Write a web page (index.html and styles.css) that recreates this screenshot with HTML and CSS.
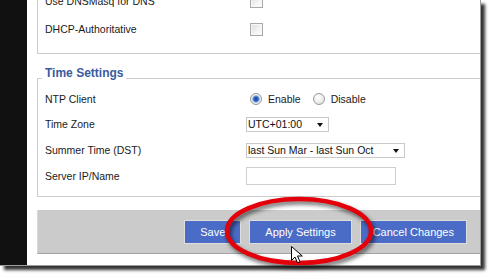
FILE: index.html
```html
<!DOCTYPE html>
<html lang="en">

<head>
    <meta charset="UTF-8">
    <title>Basic Setup - Time Settings</title>
    <link rel="stylesheet" href="styles.css">
</head>

<body>
    <div class="frame">
        <div class="strip"></div>
        <div class="main">
            <fieldset class="group group-top">
                <div class="rows">
                    <label class="lbl">Use DNSMasq for DNS</label>
                    <div class="ctl"><input type="checkbox" class="check"></div>
                    <label class="lbl">DHCP-Authoritative</label>
                    <div class="ctl"><input type="checkbox" class="check"></div>
                </div>
            </fieldset>
            <fieldset class="group group-time">
                <legend>Time Settings</legend>
                <div class="rows">
                    <label class="lbl">NTP Client</label>
                    <div class="ctl">
                        <label class="opt"><input type="radio" name="ntp" class="radio" checked>Enable</label>
                        <label class="opt"><input type="radio" name="ntp" class="radio">Disable</label>
                    </div>
                    <label class="lbl">Time Zone</label>
                    <div class="ctl">
                        <span class="pick"><select class="sel sel-zone">
                            <option>UTC+01:00</option>
                        </select></span>
                    </div>
                    <label class="lbl">Summer Time (DST)</label>
                    <div class="ctl">
                        <span class="pick"><select class="sel sel-dst">
                            <option>last Sun Mar - last Sun Oct</option>
                        </select></span>
                    </div>
                    <label class="lbl">Server IP/Name</label>
                    <div class="ctl"><input type="text" class="field"></div>
                </div>
            </fieldset>
            <div class="actions">
                <button class="btn">Save</button>
                <button class="btn">Apply Settings</button>
                <button class="btn btn-cancel">Cancel Changes</button>
            </div>
        </div>
        <!-- red marker round the apply button -->
        <svg class="ring" width="170" height="85" viewBox="0 0 170 85">
            <ellipse cx="84" cy="41" rx="72" ry="32" fill="none" stroke="#e3000b" stroke-width="4.5"/>
        </svg>
        <svg class="cursor" width="14" height="20" viewBox="0 0 14 20">
            <path d="M1.5 1.5 L1.5 15.5 L5 12 L7.5 17.8 L10 16.8 L7.5 11 L12.3 11 Z" fill="#fff" stroke="#000" stroke-width="1" stroke-linejoin="round"/>
        </svg>
    </div>
</body>

</html>
```

FILE: styles.css
```css
* {
    margin: 0;
    padding: 0;
    box-sizing: border-box;
}

html,
body {
    width: 100%;
    height: 100%;
    background: #fff;
    overflow: hidden;
}

body {
    font-family: "Liberation Sans", Arial, sans-serif;
    font-size: 10.5px;
    color: #1a1a1a;
}

.frame {
    position: relative;
    display: flex;
    width: 481px;
    height: 266px;
    border-right: 1px solid #9c9c9c;
    border-bottom: 1px solid #9c9c9c;
    box-shadow: 4px 4px 3px rgba(0, 0, 0, 0.8);
    background: #fff;
}

.strip {
    width: 27px;
    background: #111;
}

.main {
    flex: 1;
    padding-left: 10px;
    overflow: hidden;
}

.group {
    border: 1px solid #cdcdcd;
    margin-right: -20px;
    min-inline-size: 0;
}

.group-top {
    border-top: none;
    margin-top: -8px;
    padding: 0 0 15px 7px;
}

.group-top .rows {
    row-gap: 10px;
}

.group-time {
    margin-top: 12px;
    padding: 0 0 11px 7px;
}

.group-time .rows {
    grid-template-rows: 17px 18px 18px 18px;
    row-gap: 8px;
}

legend {
    font-size: 12px;
    font-weight: bold;
    line-height: 14px;
    color: #3a5ba0;
    padding: 0 3px 10px;
    margin-left: -3px;
}

.rows {
    display: grid;
    grid-template-columns: 201px auto;
    grid-auto-rows: 18px;
    align-items: center;
}

.lbl {
    white-space: nowrap;
}

.ctl {
    display: flex;
    align-items: center;
}

.check {
    appearance: none;
    width: 13px;
    height: 13px;
    margin-left: 4px;
    border: 1px solid #a9a9a9;
    background: linear-gradient(135deg, #dcdcdc 0%, #f4f4f4 60%, #fff 100%);
    box-shadow: inset 0 0 0 1px #f7f7f7;
}

.opt {
    display: flex;
    align-items: center;
    margin-right: 12px;
}

.radio {
    appearance: none;
    width: 12px;
    height: 12px;
    margin: 0 6px 0 4px;
    border: 1px solid #9a9a9a;
    border-radius: 50%;
    background: radial-gradient(circle at 40% 35%, #fff 0, #e6e6e6 70%, #d0d0d0 100%);
}

.radio:checked {
    background: radial-gradient(circle at center, #1f4ea6 0, #2f62be 2.2px, #9dbbe6 3.4px, #f2f2f2 4.4px, #dcdcdc 100%);
}

.opt + .opt .radio {
    margin-left: 0;
}

.pick {
    position: relative;
    display: inline-block;
}

.pick::after {
    content: "";
    position: absolute;
    top: 6px;
    right: 6px;
    border-left: 3.5px solid transparent;
    border-right: 3.5px solid transparent;
    border-top: 4px solid #111;
    pointer-events: none;
}

.sel {
    appearance: none;
    display: block;
    height: 15px;
    padding: 0 16px 0 1px;
    border: 1px solid #c9c9c9;
    border-radius: 0;
    background: #fff;
    font-family: inherit;
    font-size: 10.5px;
    line-height: 13px;
    color: #111;
}

.sel-zone {
    width: 83px;
}

.sel-dst {
    width: 159px;
}

.field {
    width: 150px;
    height: 18px;
    border: 1px solid #cfcfcf;
    background: #fff;
}

.actions {
    display: flex;
    justify-content: flex-end;
    align-items: center;
    gap: 8px;
    height: 44px;
    margin-top: 13px;
    padding-right: 13px;
    background: #cbcbcb;
    border-left: 1px solid #d8d8d8;
    border-bottom: 1px solid #a3a3a3;
}

.btn {
    height: 24px;
    padding: 0 15px;
    border: 1px solid #dedede;
    background: #4a6cc6;
    color: #fff;
    font-family: "Liberation Sans", Arial, sans-serif;
    font-size: 11px;
}

.btn-cancel {
    padding: 0 12px;
}

.ring {
    position: absolute;
    left: 215px;
    top: 190px;
    filter: drop-shadow(2px 3px 2px rgba(0, 0, 0, 0.6));
}

.cursor {
    position: absolute;
    left: 290px;
    top: 245px;
}
```
